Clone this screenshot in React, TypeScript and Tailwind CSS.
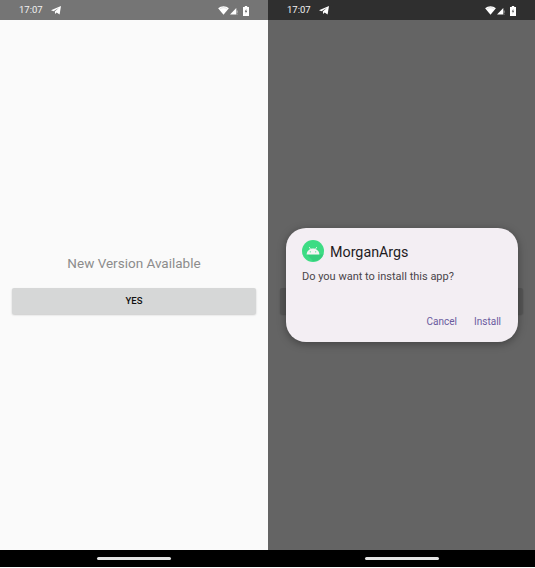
import type { ReactNode } from "react";

function StatusIcons() {
  return (
    <div className="flex items-center">
      <svg width="11" height="9" viewBox="0 0 12 10" className="mr-[1px]">
        <path d="M0 2.6C3.4-.5 8.6-.5 12 2.6L6 9.6z" fill="#fff" />
        <path d="M2.2 3.1C4.5 1.500 7.500 1.500 9.800 3.100" stroke="#8a8a8a" strokeWidth="0.6" fill="none" opacity="0.5" />
      </svg>
      <svg width="9" height="9" viewBox="0 0 10 10">
        <path d="M0 9.500L7 2.200V9.500z" fill="#fff" />
        <path d="M8 5v2.600M8 8.600v.9" stroke="#fff" strokeWidth="0.8" opacity="0.7" />
      </svg>
      <svg width="6" height="10" viewBox="0 0 6 10" className="ml-[4px]">
        <path d="M1.800 0h2.400v1H6v9H0V1h1.800z" fill="#fff" />
        <path d="M3.400 2.800L1.800 5.800h1.100l-.3 1.900 1.600-3H3.100z" fill="#555" />
      </svg>
    </div>
  );
}

function StatusBar({ bg }: { bg: string }) {
  return (
    <div className={`flex h-5 items-center justify-between pl-[19px] pr-[19px] pt-[1px] ${bg}`}>
      <div className="flex items-center gap-[8px]">
        <span className="text-[9.5px] text-[#f2f2f2]">17:07</span>
        <svg width="10" height="9" viewBox="0 0 10 9">
          <path d="M0 4.200L10 0 8.600 8.600 5.600 6.600 4.200 8 3.800 5.600 8 1.800 2.600 5.200z" fill="#fff" />
        </svg>
      </div>
      <StatusIcons />
    </div>
  );
}

function NavBar() {
  return (
    <div className="flex h-[17px] items-center justify-center bg-black pb-[1px]">
      <div className="h-[3px] w-[74px] rounded-full bg-[#e4e4e4]" />
    </div>
  );
}

function UpdatePrompt({ message = true }: { message?: boolean }) {
  return (
    <div className="flex h-full flex-col bg-[#fafafa] px-3 pt-[233px]">
      <p className="h-5 text-center text-[13.5px] leading-5 text-[#8c8c8c]">{message && "New Version Available"}</p>
      <button className="mt-[15px] h-[26px] rounded-[2px] bg-[#d6d7d7] text-[9.5px] font-medium text-[#111] shadow-[0_1px_2px_rgba(0,0,0,0.2)]">
        {message && "YES"}
      </button>
    </div>
  );
}

function AndroidIcon() {
  return (
    <svg width="22" height="22" viewBox="0 0 22 22">
      <circle cx="11" cy="11" r="11" fill="#3ddc84" />
      <path d="M5 14.500L11 21A11 11 0 0 0 21.500 14.500z" fill="#2fc476" opacity="0.6" />
      <path d="M4.600 14.400C4.800 10.800 7.600 8.400 11 8.400S17.200 10.800 17.400 14.400z" fill="#f4f4f4" />
      <path d="M7.200 7L8.500 9M14.800 7L13.500 9" stroke="#f4f4f4" strokeWidth="0.8" />
      <circle cx="8.300" cy="11.800" r="0.600" fill="#3ddc84" />
      <circle cx="13.700" cy="11.800" r="0.600" fill="#3ddc84" />
    </svg>
  );
}

function InstallDialog() {
  return (
    <div className="absolute left-[18px] top-[208px] flex h-[114px] w-[232px] flex-col rounded-[20px] bg-[#f3eef3] px-4 pt-3 shadow-[0_2px_8px_rgba(0,0,0,0.35)]">
      <div className="flex items-center gap-[6px]">
        <AndroidIcon />
        <span className="pt-[1px] text-[14.3px] leading-5 text-[#1e1b1e]">MorganArgs</span>
      </div>
      <p className="mt-[7px] text-[11px] leading-4 text-[#4a454a]">Do you want to install this app?</p>
      <div className="mt-[29px] flex justify-end gap-[17px] pr-[1px] text-[10px] leading-4 text-[#6a5a9e]">
        <span>Cancel</span>
        <span>Install</span>
      </div>
    </div>
  );
}

function Phone({ bar, children }: { bar: string; children: ReactNode }) {
  return (
    <div className="flex h-[567px] w-full flex-col">
      <StatusBar bg={bar} />
      <div className="relative flex-1 overflow-hidden">{children}</div>
      <NavBar />
    </div>
  );
}

export default function App() {
  return (
    <div className="grid h-[568px] w-[535px] grid-cols-[268px_267px] overflow-hidden bg-[#fafafa] font-['Roboto',sans-serif]">
      <Phone bar="bg-[#757575]">
        <UpdatePrompt />
      </Phone>
      <Phone bar="bg-[#2f2f2f]">
        <UpdatePrompt message={false} />
        <div className="absolute inset-0 bg-black/60" />
        <InstallDialog />
      </Phone>
    </div>
  );
}
